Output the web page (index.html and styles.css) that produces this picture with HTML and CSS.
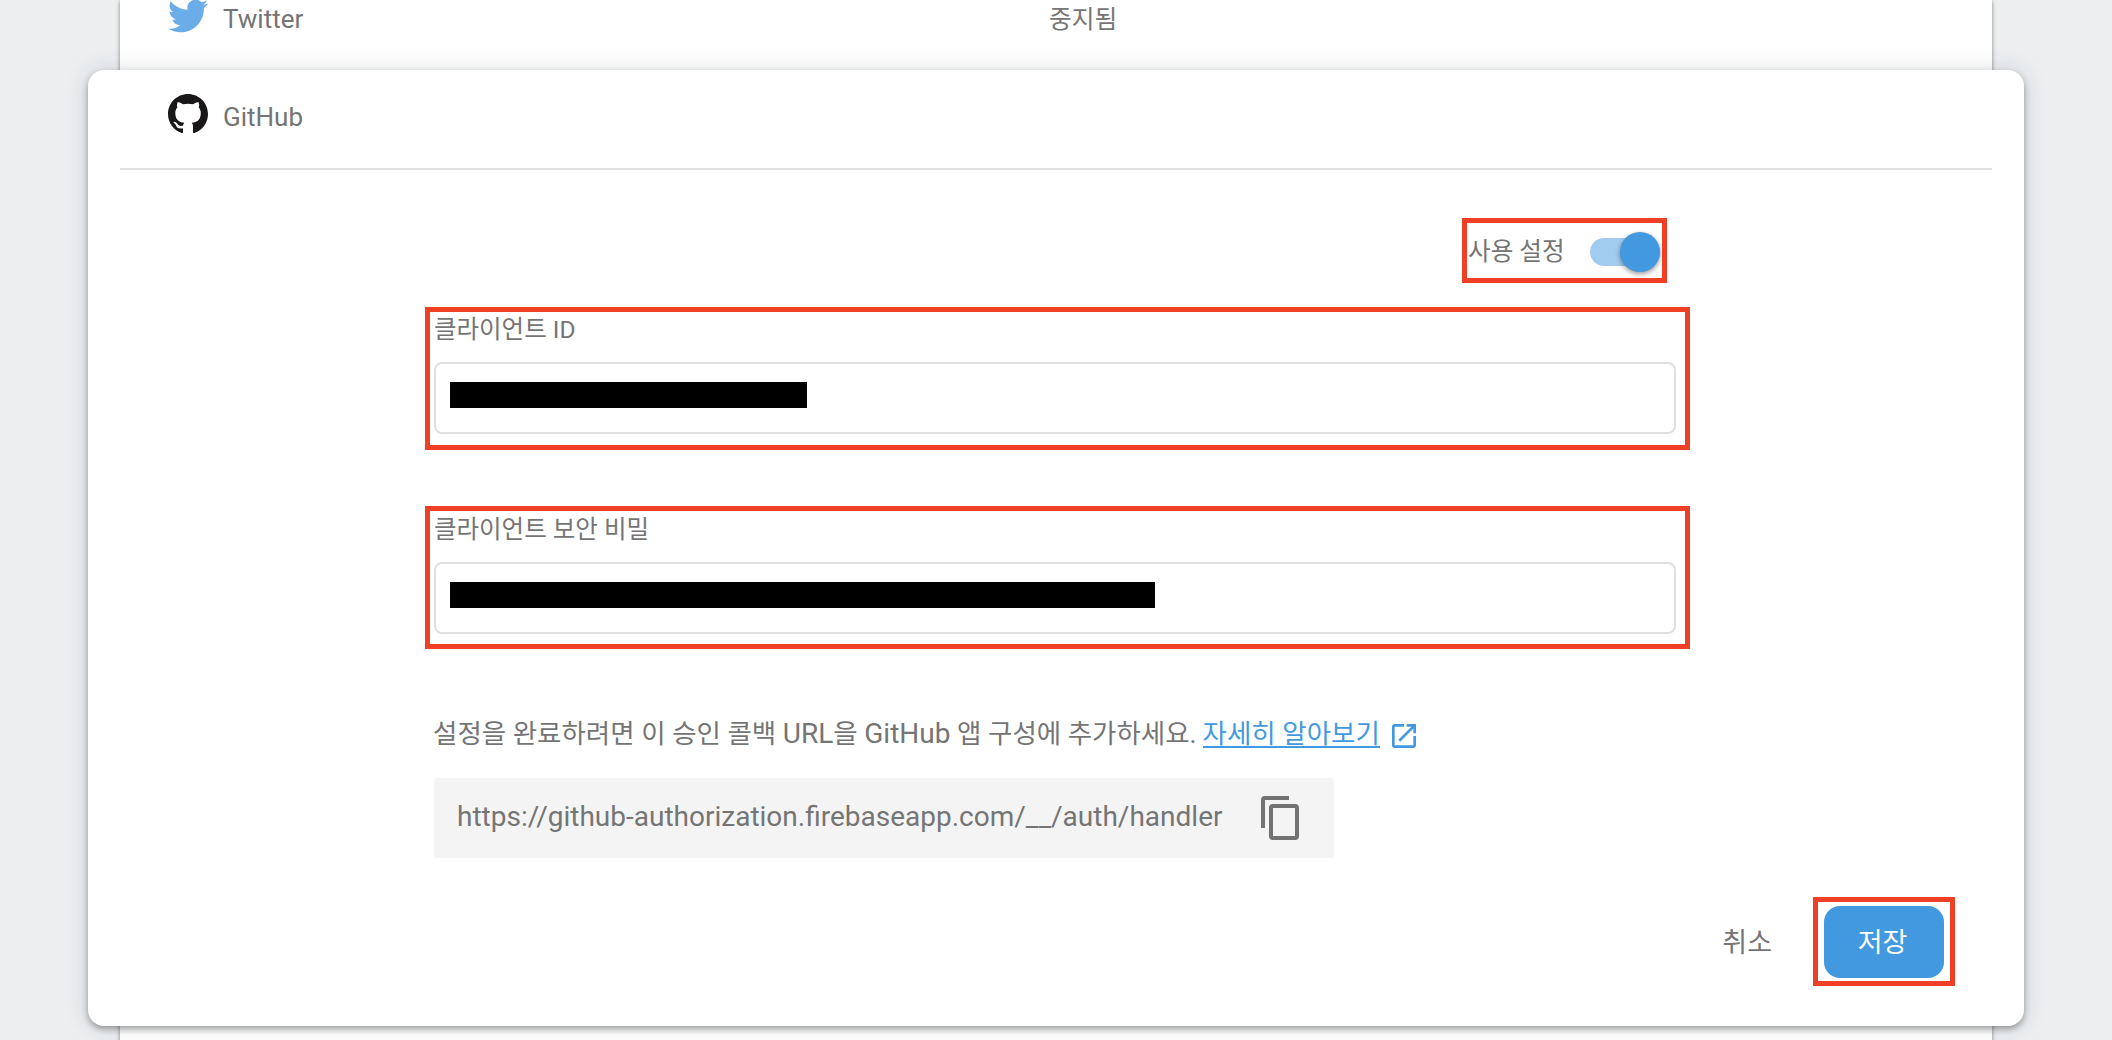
FILE: index.html
```
<!DOCTYPE html>
<html lang="ko">
<head>
<meta charset="utf-8">
<title>Firebase Authentication</title>
<link rel="stylesheet" href="styles.css">
</head>
<body>
<main class="providers">
  <section class="row">
    <div class="provider">
      <svg class="icon-twitter" viewBox="0 0 24 24"><path fill="#6bade9" d="M23.95 4.57a10 10 0 0 1-2.82.77 4.96 4.96 0 0 0 2.16-2.72c-.95.55-2 .96-3.13 1.18a4.92 4.92 0 0 0-8.38 4.48C7.69 8.1 4.07 6.13 1.64 3.16a4.82 4.82 0 0 0-.67 2.48c0 1.71.87 3.21 2.19 4.1a4.9 4.9 0 0 1-2.23-.62v.06a4.92 4.92 0 0 0 3.95 4.83 5 5 0 0 1-2.21.08 4.94 4.94 0 0 0 4.6 3.42A9.87 9.87 0 0 1 0 19.54a13.99 13.99 0 0 0 7.55 2.21c9.05 0 14-7.5 14-13.98 0-.21 0-.42-.02-.63a9.94 9.94 0 0 0 2.46-2.55z"/></svg>
      <span>Twitter</span>
    </div>
    <div class="status">중지됨</div>
  </section>

  <section class="panel">
    <header class="panel-head">
      <svg class="icon-github" viewBox="0 0 16 16"><path fill="#191717" d="M8 0C3.58 0 0 3.58 0 8c0 3.54 2.29 6.53 5.47 7.59.4.07.55-.17.55-.38 0-.19-.01-.82-.01-1.49-2.01.37-2.53-.49-2.69-.94-.09-.23-.48-.94-.82-1.13-.28-.15-.68-.52-.01-.53.63-.01 1.08.58 1.23.82.72 1.21 1.87.87 2.33.66.07-.52.28-.87.51-1.07-1.78-.2-3.64-.89-3.64-3.95 0-.87.31-1.59.82-2.15-.08-.2-.36-1.02.08-2.12 0 0 .67-.21 2.2.82.64-.18 1.32-.27 2-.27s1.36.09 2 .27c1.53-1.04 2.2-.82 2.2-.82.44 1.1.16 1.92.08 2.12.51.56.82 1.27.82 2.15 0 3.07-1.87 3.75-3.65 3.95.29.25.54.73.54 1.48 0 1.07-.01 1.93-.01 2.2 0 .21.15.46.55.38A8.01 8.01 0 0 0 16 8c0-4.42-3.58-8-8-8z"/></svg>
      <span>GitHub</span>
    </header>

    <div class="form">
      <div class="enable marked">
        <span class="enable-label">사용 설정</span>
        <span class="toggle"><span class="thumb"></span></span>
      </div>

      <div class="field field-id marked">
        <label>클라이언트 <span class="latin">ID</span></label>
        <div class="input"><span class="redacted redacted-id"></span></div>
      </div>

      <div class="field field-secret marked">
        <label>클라이언트 보안 비밀</label>
        <div class="input"><span class="redacted redacted-secret"></span></div>
      </div>

      <p class="hint">
        <span class="hint-text">설정을 완료하려면 이 승인 콜백 <span class="latin">URL</span>을 <span class="latin">GitHub</span> 앱 구성에 추가하세요.</span>
        <a class="more">자세히 알아보기</a>
        <svg class="icon-open" viewBox="3 3 18 18"><path fill="#4399e0" d="M19 19H5V5h7V3H5a2 2 0 0 0-2 2v14a2 2 0 0 0 2 2h14c1.100 0 2-.9 2-2v-7h-2v7zM14 3v2h3.590l-9.830 9.830 1.410 1.410L19 6.410V10h2V3h-7z"/></svg>
      </p>

      <div class="callback">
        <span class="url">https://github-authorization.firebaseapp.com/__/auth/handler</span>
        <svg class="icon-copy" viewBox="2 1 19 22"><path fill="#727272" d="M16 1H4a2 2 0 0 0-2 2v14h2V3h12V1zm3 4H8a2 2 0 0 0-2 2v14a2 2 0 0 0 2 2h11a2 2 0 0 0 2-2V7a2 2 0 0 0-2-2zm0 16H8V7h11v14z"/></svg>
      </div>
    </div>

    <footer class="actions">
      <span class="cancel">취소</span>
      <div class="save-wrap marked"><button class="save">저장</button></div>
    </footer>
  </section>

  <section class="row row-next"></section>
</main>
</body>
</html>
```
FILE: styles.css
```
* { box-sizing: border-box; }

body {
  margin: 0;
  height: 1040px;
  overflow: hidden;
  background: #eceef0;
  color: #757575;
  font-family: Roboto, "Noto Sans CJK KR", sans-serif;
  font-size: 26px;
  line-height: 36px;
}

svg { display: block; flex: none; }

.providers {
  width: 1872px;
  height: 1060px;
  margin: 0 auto;
  display: flex;
  flex-direction: column;
  background: #fff;
  box-shadow: 0 2px 4px rgba(0, 0, 0, .3), 0 0 4px rgba(0, 0, 0, .18);
}

.row { height: 70px; display: flex; flex: none; }
.row-next { height: 34px; }

.provider { width: 929px; padding-left: 48px; display: flex; gap: 15px; }
.provider span { margin-top: 1px; }
.icon-twitter { width: 40px; height: 40px; margin-top: -4px; }
.status { padding-top: 2px; font-size: 24.7px; }

.panel {
  position: relative;
  flex: none;
  height: 956px;
  margin: 0 -32px;
  border-radius: 16px;
  background: #fff;
  box-shadow: 0 3px 6px rgba(0, 0, 0, .34), 0 0 24px rgba(50, 60, 75, .15);
}

.panel-head {
  height: 100px;
  margin: 0 32px;
  padding: 24px 0 0 48px;
  display: flex;
  gap: 15px;
  border-bottom: 2px solid #e0e0e0;
}
.panel-head span { margin-top: 5px; }
.icon-github { width: 40px; height: 40px; }

.form {
  width: 1242px;
  margin-left: 346px;
  display: flex;
  flex-direction: column;
}

/* red frames laid over the parts to fill in */
.marked { position: relative; }
.marked::after {
  content: "";
  position: absolute;
  border: 5px solid #ef4026;
}

.enable {
  align-self: flex-end;
  width: 193px;
  height: 40px;
  margin: 62px 16px 0 0;
  display: flex;
  align-items: center;
  justify-content: space-between;
  font-size: 24.6px;
}
.enable-label { padding: 0 0 1px 1px; }
.enable::after { inset: -14px -7px -11px -5px; }

.toggle {
  width: 70px;
  height: 28px;
  display: flex;
  align-items: center;
  justify-content: flex-end;
  border-radius: 14px;
  background: #a1ccf0;
}
.thumb {
  width: 40px;
  height: 40px;
  border-radius: 50%;
  background: #4399e0;
  box-shadow: 0 2px 5px rgba(0, 0, 0, .4);
}

.field { display: flex; flex-direction: column; font-size: 24.5px; }
.field label { height: 50px; line-height: 35px; white-space: nowrap; }
.field-id { margin-top: 40px; }
.field-id::after { inset: -5px -14px -16px -9px; }
.field-secret { margin-top: 78px; }
.field-secret::after { inset: -6px -14px -15px -9px; }

.input {
  height: 72px;
  padding: 18px 14px;
  border: 2px solid #e0e0e0;
  border-radius: 8px;
}
.redacted { display: block; height: 26px; background: #000; }
.redacted-id { width: 357px; }
.redacted-secret { width: 705px; }

.hint {
  height: 36px;
  margin: 82px 0 0;
  display: flex;
  font-size: 26.5px;
  white-space: nowrap;
}
.hint .latin { font-size: 28px; }
.hint-text { margin-left: -1px; }
.more {
  height: 32px;
  margin-left: 6px;
  border-bottom: 2px solid #4399e0;
  color: #4399e0;
}
.icon-open { width: 24px; height: 24px; margin: 8px 0 0 12px; }

.callback {
  width: 900px;
  height: 80px;
  margin-top: 26px;
  padding: 0 35px 0 23px;
  display: flex;
  align-items: center;
  justify-content: space-between;
  border-radius: 4px;
  background: #f4f4f4;
}
.url { padding-bottom: 2px; font-size: 28px; }
.icon-copy { width: 38px; height: 44px; }

.actions {
  margin: 48px 80px 0 0;
  display: flex;
  align-items: center;
  justify-content: flex-end;
  gap: 52px;
  font-size: 27px;
}
.cancel { padding-top: 1px; }
.save-wrap::after { inset: -9px -11px -8px -11px; }
.save {
  display: block;
  width: 120px;
  height: 72px;
  padding: 1px 3px 0 0;
  border: 0;
  border-radius: 16px;
  background: #4399e0;
  color: #fff;
  font: inherit;
}
```
